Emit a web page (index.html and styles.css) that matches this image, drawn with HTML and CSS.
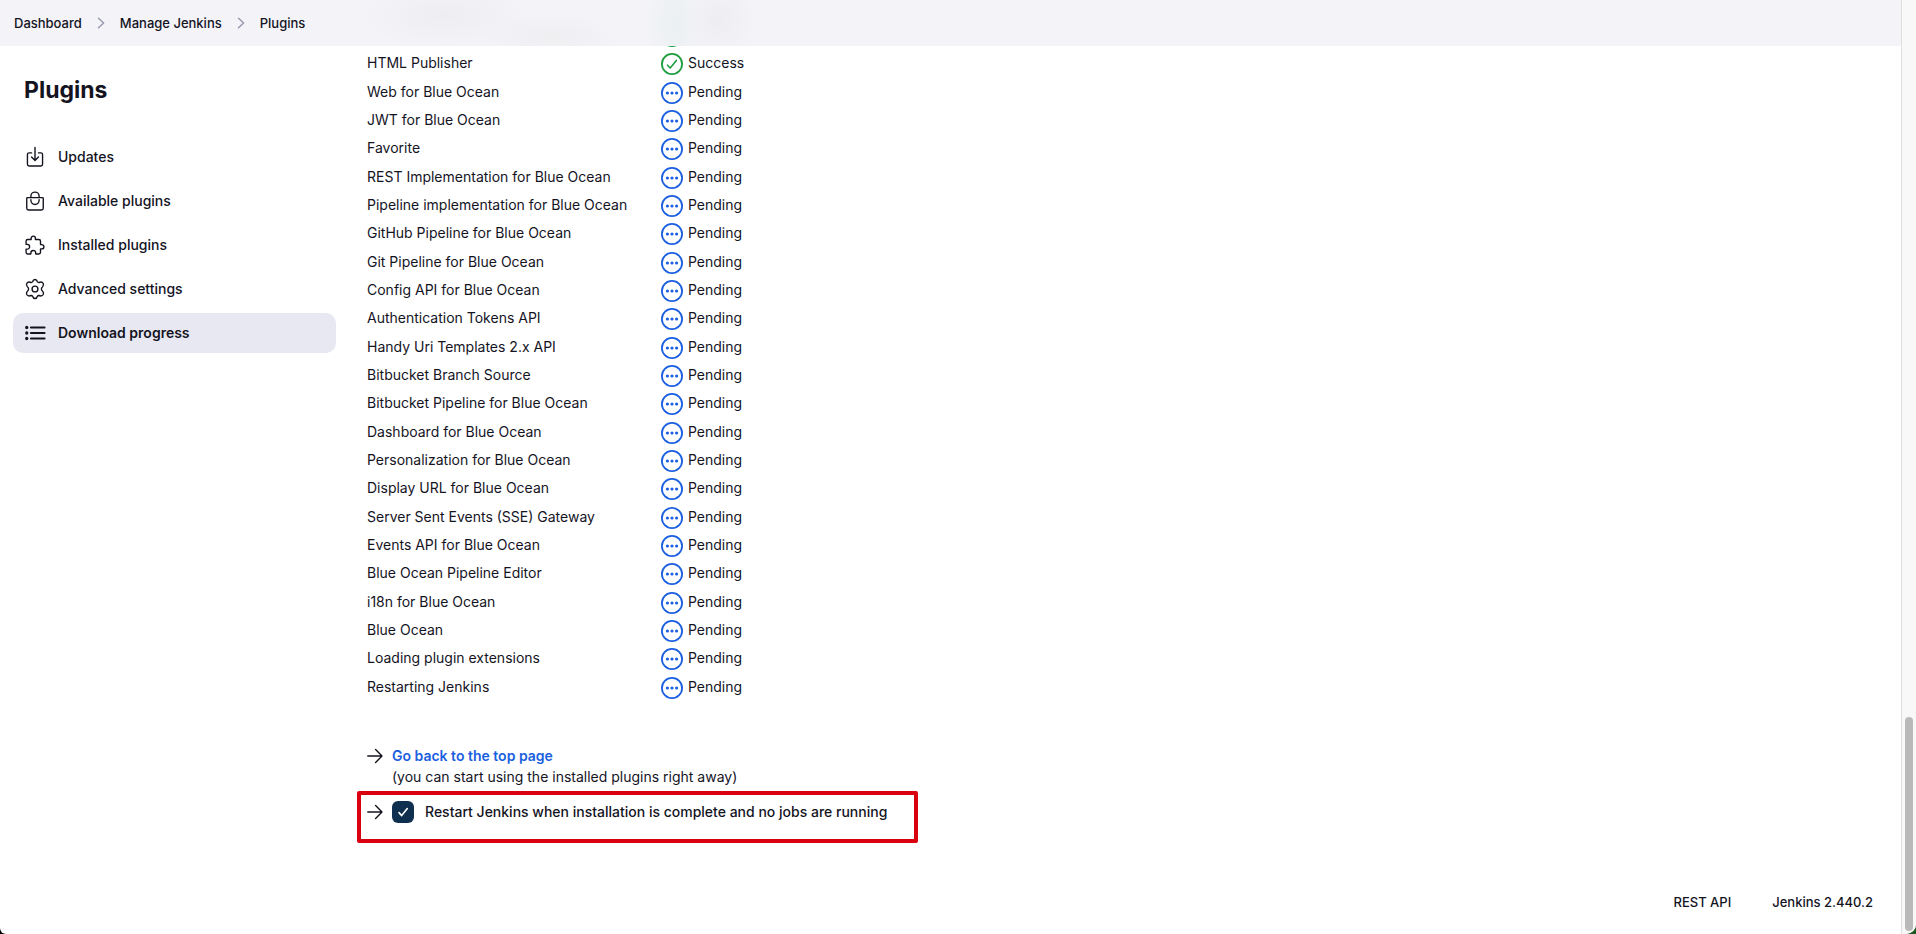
FILE: index.html
```html
<!DOCTYPE html>
<html lang="en">
<head>
<meta charset="utf-8">
<title>Plugins - Jenkins</title>
<link rel="stylesheet" href="styles.css">
</head>
<body>
<svg class="sprite" aria-hidden="true">
  <symbol id="pending" viewBox="0 0 22 22"><circle cx="11" cy="11" r="10.1" fill="none" stroke="currentColor" stroke-width="1.8"/><circle cx="6.4" cy="11" r="1.6" fill="currentColor"/><circle cx="11" cy="11" r="1.6" fill="currentColor"/><circle cx="15.6" cy="11" r="1.6" fill="currentColor"/></symbol>
  <symbol id="success" viewBox="0 0 22 22"><circle cx="11" cy="11" r="10.1" fill="none" stroke="currentColor" stroke-width="1.8"/><path d="M6.6 12.2l2.6 2.8 6.2-7.6" fill="none" stroke="currentColor" stroke-width="1.6" stroke-linecap="round" stroke-linejoin="round"/></symbol>
  <symbol id="arrow" viewBox="0 0 16 16"><path d="M.8 8h14M8.6 1.6L15 8l-6.4 6.4" fill="none" stroke="currentColor" stroke-width="1.4" stroke-linecap="round" stroke-linejoin="round"/></symbol>
  <symbol id="chevron" viewBox="0 0 8 12"><path d="M1.5 1.2L6.6 6l-5.1 4.8" fill="none" stroke="currentColor" stroke-width="1.5" stroke-linecap="round" stroke-linejoin="round"/></symbol>
</svg>
<div class="window">
  <div class="page">
    <nav class="breadcrumbs" aria-label="Breadcrumb">
      <a href="#">Dashboard</a><svg class="chevron"><use href="#chevron"/></svg>
      <a href="#">Manage Jenkins</a><svg class="chevron"><use href="#chevron"/></svg>
      <a href="#">Plugins</a>
    </nav>
    <div class="columns">
      <aside class="side">
        <h1>Plugins</h1>
        <nav class="tasks">
          <a href="#"><svg viewBox="0 0 512 512"><path d="M336 160h56a40 40 0 0140 40v224a40 40 0 01-40 40H120a40 40 0 01-40-40V200a40 40 0 0140-40h56"/><path d="M176 256l80 80 80-80M256 32v300"/></svg>Updates</a>
          <a href="#"><svg viewBox="0 0 512 512"><path d="M80 176h352a16 16 0 0116 16v232c0 22-18 40-40 40H104c-22 0-40-18-40-40V192a16 16 0 0116-16z"/><path d="M160 176v-32a96 96 0 0196-96 96 96 0 0196 96v32M160 224v16a96 96 0 0096 96 96 96 0 0096-96v-16"/></svg>Available plugins</a>
          <a href="#"><svg viewBox="0 0 512 512"><path d="M413.66 246.1H386a2 2 0 01-2-2v-77.24A38.86 38.86 0 00345.14 128H267.9a2 2 0 01-2-2V98.34c0-27.14-21.5-49.86-48.64-50.33a49.53 49.53 0 00-50.4 49.51V126a2 2 0 01-2 2H87.62A39.74 39.74 0 0048 167.62V238a2 2 0 002 2h26.91c29.37 0 53.68 25.48 54.09 54.85.42 29.87-23.51 57.15-53.29 57.15H50a2 2 0 00-2 2v70.38A39.74 39.74 0 0087.62 464H158a2 2 0 002-2v-20.93c0-30.28 24.75-56.35 55-57.06 30.1-.7 57 20.31 57 50.28V462a2 2 0 002 2h71.14A38.86 38.86 0 00384 425.14v-78a2 2 0 012-2h28.48c27.63 0 49.52-22.67 49.52-50.4s-23.2-48.64-50.34-48.64z"/></svg>Installed plugins</a>
          <a href="#"><svg viewBox="0 0 24 24"><circle class="thin" cx="12" cy="12" r="3.2"/><path class="thin" d="M9.4 4.1Q10 1.6 12 1.6T14.6 4.1Q15.1 5 16.3 4.9Q19.6 3.6 21 6Q21.9 8 20.3 9.6Q19 10.5 19 12T20.3 14.4Q21.9 16 21 18Q19.6 20.4 16.3 19.1Q15.1 19 14.6 19.9Q14 22.4 12 22.4T9.4 19.9Q8.9 19 7.7 19.1Q4.4 20.4 3 18Q2.1 16 3.7 14.4Q5 13.5 5 12T3.7 9.6Q2.1 8 3 6Q4.4 3.6 7.7 4.9Q8.9 5 9.4 4.1z"/></svg>Advanced settings</a>
          <a href="#" class="active" aria-current="page"><svg viewBox="0 0 512 512"><path class="bold" d="M160 128h320M160 256h320M160 384h320"/><g fill="currentColor" stroke="none"><circle cx="64" cy="128" r="38"/><circle cx="64" cy="256" r="38"/><circle cx="64" cy="384" r="38"/></g></svg>Download progress</a>
        </nav>
      </aside>
      <main class="main">
        <table class="jobs">
          <tbody>
            <tr><td></td><td><span class="status ok"><svg><use href="#success"/></svg></span></td></tr>
            <tr><td>HTML Publisher</td><td><span class="status ok"><svg><use href="#success"/></svg>Success</span></td></tr>
            <tr><td>Web for Blue Ocean</td><td><span class="status"><svg><use href="#pending"/></svg>Pending</span></td></tr>
            <tr><td>JWT for Blue Ocean</td><td><span class="status"><svg><use href="#pending"/></svg>Pending</span></td></tr>
            <tr><td>Favorite</td><td><span class="status"><svg><use href="#pending"/></svg>Pending</span></td></tr>
            <tr><td>REST Implementation for Blue Ocean</td><td><span class="status"><svg><use href="#pending"/></svg>Pending</span></td></tr>
            <tr><td>Pipeline implementation for Blue Ocean</td><td><span class="status"><svg><use href="#pending"/></svg>Pending</span></td></tr>
            <tr><td>GitHub Pipeline for Blue Ocean</td><td><span class="status"><svg><use href="#pending"/></svg>Pending</span></td></tr>
            <tr><td>Git Pipeline for Blue Ocean</td><td><span class="status"><svg><use href="#pending"/></svg>Pending</span></td></tr>
            <tr><td>Config API for Blue Ocean</td><td><span class="status"><svg><use href="#pending"/></svg>Pending</span></td></tr>
            <tr><td>Authentication Tokens API</td><td><span class="status"><svg><use href="#pending"/></svg>Pending</span></td></tr>
            <tr><td>Handy Uri Templates 2.x API</td><td><span class="status"><svg><use href="#pending"/></svg>Pending</span></td></tr>
            <tr><td>Bitbucket Branch Source</td><td><span class="status"><svg><use href="#pending"/></svg>Pending</span></td></tr>
            <tr><td>Bitbucket Pipeline for Blue Ocean</td><td><span class="status"><svg><use href="#pending"/></svg>Pending</span></td></tr>
            <tr><td>Dashboard for Blue Ocean</td><td><span class="status"><svg><use href="#pending"/></svg>Pending</span></td></tr>
            <tr><td>Personalization for Blue Ocean</td><td><span class="status"><svg><use href="#pending"/></svg>Pending</span></td></tr>
            <tr><td>Display URL for Blue Ocean</td><td><span class="status"><svg><use href="#pending"/></svg>Pending</span></td></tr>
            <tr><td>Server Sent Events (SSE) Gateway</td><td><span class="status"><svg><use href="#pending"/></svg>Pending</span></td></tr>
            <tr><td>Events API for Blue Ocean</td><td><span class="status"><svg><use href="#pending"/></svg>Pending</span></td></tr>
            <tr><td>Blue Ocean Pipeline Editor</td><td><span class="status"><svg><use href="#pending"/></svg>Pending</span></td></tr>
            <tr><td>i18n for Blue Ocean</td><td><span class="status"><svg><use href="#pending"/></svg>Pending</span></td></tr>
            <tr><td>Blue Ocean</td><td><span class="status"><svg><use href="#pending"/></svg>Pending</span></td></tr>
            <tr><td>Loading plugin extensions</td><td><span class="status"><svg><use href="#pending"/></svg>Pending</span></td></tr>
            <tr><td>Restarting Jenkins</td><td><span class="status"><svg><use href="#pending"/></svg>Pending</span></td></tr>
          </tbody>
        </table>
        <div class="next">
          <svg class="arrow"><use href="#arrow"/></svg>
          <div><a class="top-link" href="#">Go back to the top page</a><p>(you can start using the installed plugins right away)</p></div>
        </div>
        <div class="restart">
          <svg class="arrow"><use href="#arrow"/></svg>
          <span class="check"><input type="checkbox" id="restart" checked><svg viewBox="0 0 22 22"><path d="M7 11.6l2.7 3 5.6-7"/></svg></span>
          <label for="restart">Restart Jenkins when installation is complete and no jobs are running</label>
        </div>
      </main>
    </div>
    <footer class="footer"><a href="#">REST API</a><a href="#">Jenkins 2.440.2</a></footer>
  </div>
  <div class="scrollbar"><div class="thumb"></div></div>
</div>
</body>
</html>
```
FILE: styles.css
```css
* { box-sizing: border-box; }
body {
  margin: 0;
  background: linear-gradient(90deg, #000 50%, #1d5a1d 50%);
  color: #14141f;
  font-family: Inter, "Liberation Sans", sans-serif;
  font-size: 14px;
  line-height: 20px;
}
a { color: inherit; text-decoration: none; }
.sprite { position: absolute; width: 0; height: 0; }
.window {
  display: grid;
  grid-template-columns: 1fr 15px;
  height: 100vh;
  overflow: hidden;
  border-radius: 0 0 10px 6px;
  background: #fff;
}
.page { display: flex; flex-direction: column; min-width: 0; }
.breadcrumbs {
  position: relative;
  z-index: 1;
  display: flex;
  align-items: center;
  height: 46px;
  flex: none;
  padding-left: 14px;
  font-size: 13px;
  font-weight: 500;
  background:
    radial-gradient(ellipse 90px 34px at 445px 15px, #eeeef2, transparent),
    radial-gradient(ellipse 70px 22px at 550px 36px, #efeff2, transparent),
    radial-gradient(ellipse 26px 60px at 674px 24px, #ebf0f1, transparent),
    radial-gradient(ellipse 40px 40px at 718px 20px, #eeeef2, transparent),
    #f3f3f8;
}
.chevron { width: 8px; height: 12px; margin: 0 15px; color: #9a9ab0; }
.columns { display: grid; grid-template-columns: 367px 1fr; flex: 1; }
.side { padding: 30px 31px 0 13px; }
.side h1 { margin: 0 0 33px; padding-left: 11px; font-size: 23px; line-height: 28px; font-weight: 700; }
.tasks { display: grid; gap: 4px; }
.tasks a {
  display: flex;
  align-items: center;
  gap: 12px;
  height: 40px;
  padding-left: 11px;
  border-radius: 10px;
  font-weight: 500;
}
.tasks .active { background: #e8e8f2; font-weight: 600; }
.tasks svg {
  width: 22px;
  height: 22px;
  fill: none;
  stroke: currentColor;
  stroke-width: 32;
  stroke-linecap: round;
  stroke-linejoin: round;
}
.tasks .thin { stroke-width: 1.5; }
.tasks .bold { stroke-width: 44; }
.main { margin-top: -24px; }
.jobs { border-collapse: collapse; }
.jobs td { height: 28px; padding: 0; vertical-align: middle; }
.jobs tr:nth-child(3n) td { height: 29px; }
.jobs td:first-child { width: 294px; padding-bottom: 2px; }
.status { display: flex; align-items: flex-start; gap: 5px; height: 22px; line-height: 20px; }
.status svg { width: 22px; height: 22px; color: #1b5fe0; }
.status.ok svg { color: #1f9d3f; }
.arrow { width: 16px; height: 16px; flex: none; }
.next { display: flex; gap: 9px; margin-top: 43px; }
.next .arrow { margin-top: 3px; }
.next p { margin: 0; line-height: 20px; }
.top-link { display: block; line-height: 22px; font-weight: 600; color: #1b5fe0; }
.restart {
  display: flex;
  align-items: center;
  width: fit-content;
  height: 52px;
  margin: 4px 0 0 -10px;
  padding: 0 27px 10px 6px;
  border: 4px solid #d9000f;
  border-radius: 2px;
  font-weight: 500;
}
.check { display: grid; margin: 0 11px 0 9px; }
.check input, .check svg { grid-area: 1 / 1; width: 22px; height: 22px; margin: 0; }
.check input { appearance: none; border-radius: 6px; background: #0f2f4f; }
.check svg { pointer-events: none; fill: none; stroke: #fff; stroke-width: 1.6; stroke-linecap: round; stroke-linejoin: round; }
.footer {
  display: flex;
  justify-content: flex-end;
  gap: 41px;
  padding: 0 28px 22px;
  font-size: 13px;
  font-weight: 500;
}
.scrollbar { display: flex; align-items: flex-end; padding: 0 3px 3px; background: #f8f8f8; border-left: 1px solid #dedede; }
.thumb { width: 8px; height: 23%; border-radius: 4px; background: #b9b9b9; }
```
